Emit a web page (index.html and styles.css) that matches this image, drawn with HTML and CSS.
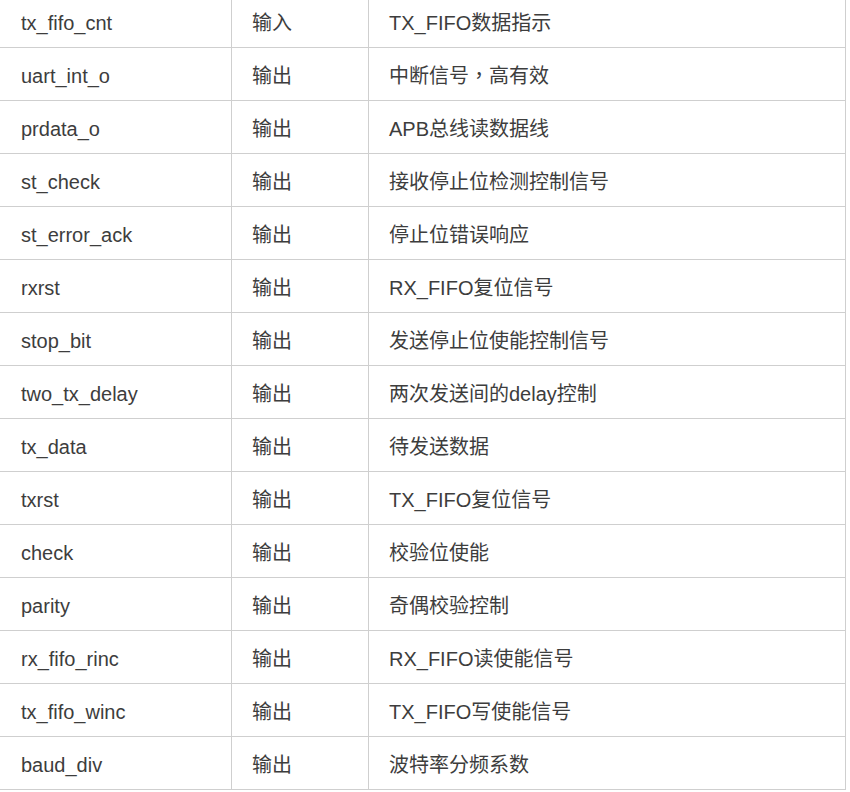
FILE: index.html
```html
<!DOCTYPE html>
<html>
<head>
<meta charset="utf-8">
<link rel="stylesheet" href="styles.css">
</head>
<body>
<table class="sig-table">
<colgroup><col class="c1"><col class="c2"><col class="c3"></colgroup>
<tbody>
<tr><td>tx_fifo_cnt</td><td>输入</td><td>TX_FIFO数据指示</td></tr>
<tr><td>uart_int_o</td><td>输出</td><td>中断信号<span class="punct">，</span>高有效</td></tr>
<tr><td>prdata_o</td><td>输出</td><td>APB总线读数据线</td></tr>
<tr><td>st_check</td><td>输出</td><td>接收停止位检测控制信号</td></tr>
<tr><td>st_error_ack</td><td>输出</td><td>停止位错误响应</td></tr>
<tr><td>rxrst</td><td>输出</td><td>RX_FIFO复位信号</td></tr>
<tr><td>stop_bit</td><td>输出</td><td>发送停止位使能控制信号</td></tr>
<tr><td>two_tx_delay</td><td>输出</td><td>两次发送间的delay控制</td></tr>
<tr><td>tx_data</td><td>输出</td><td>待发送数据</td></tr>
<tr><td>txrst</td><td>输出</td><td>TX_FIFO复位信号</td></tr>
<tr><td>check</td><td>输出</td><td>校验位使能</td></tr>
<tr><td>parity</td><td>输出</td><td>奇偶校验控制</td></tr>
<tr><td>rx_fifo_rinc</td><td>输出</td><td>RX_FIFO读使能信号</td></tr>
<tr><td>tx_fifo_winc</td><td>输出</td><td>TX_FIFO写使能信号</td></tr>
<tr><td>baud_div</td><td>输出</td><td>波特率分频系数</td></tr>
</tbody>
</table>
</body>
</html>
```
FILE: styles.css
```css
html, body {
  margin: 0;
  padding: 0;
  background: #fff;
}
body {
  font-family: "Liberation Sans", Arial, "Noto Sans CJK SC", sans-serif;
  font-size: 20px;
  color: #3d3d3d;
}
.sig-table {
  border-collapse: collapse;
  table-layout: fixed;
  width: 846px;
  margin-top: -6px;
  margin-left: -1px;
}
.c1 { width: 232px; }
.c2 { width: 137px; }
.c3 { width: 477px; }
.sig-table td {
  border: 1px solid #cfcfcf;
  height: 53px;
  padding: 3px 0 0 20px;
  box-sizing: border-box;
  vertical-align: middle;
  white-space: nowrap;
  line-height: 20px;
}
.sig-table td:first-child {
  padding-left: 21px;
}
.punct {
  font-family: "Noto Sans CJK TC", sans-serif;
}
```
